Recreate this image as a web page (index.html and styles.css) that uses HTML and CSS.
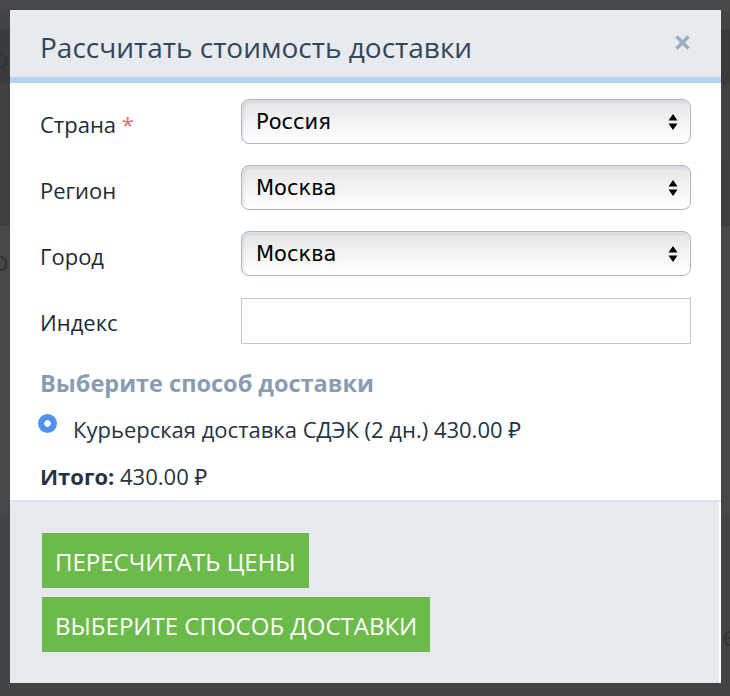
FILE: index.html
```html
<!DOCTYPE html>
<html lang="ru">
<head>
<meta charset="utf-8">
<title>Рассчитать стоимость доставки</title>
<link rel="stylesheet" href="styles.css">
</head>
<body>
<div class="page">
  <div class="band b1"></div>
  <div class="band b2"></div>
  <div class="band b3"><span class="ghost-left">о</span></div>
  <div class="band b4"></div>
  <div class="band b5"></div>
  <div class="band b6"><span class="ghost-left g2">о</span></div>
  <div class="band b7"><span class="ghost-right">е</span></div>
</div>

<div class="modal">
  <div class="modal-header">
    <h2 class="modal-title">Рассчитать стоимость доставки</h2>
    <svg class="close" width="15" height="15" viewBox="0 0 15 15"><path d="M1.5 1.5 L13.5 13.5 M13.5 1.5 L1.5 13.5" stroke="#9eadbd" stroke-width="3.4" stroke-linecap="butt"/></svg>
  </div>
  <div class="modal-body">
    <div class="form-grid">
      <label class="label">Страна <span class="req">*</span></label>
      <div class="select"><span>Россия</span>
        <svg class="arrows" width="10" height="18" viewBox="0 0 10 18"><path d="M5 1 L9.5 7.5 H0.5 Z M5 17 L9.5 10.5 H0.5 Z" fill="#000"/></svg>
      </div>
      <label class="label">Регион</label>
      <div class="select"><span>Москва</span>
        <svg class="arrows" width="10" height="18" viewBox="0 0 10 18"><path d="M5 1 L9.5 7.5 H0.5 Z M5 17 L9.5 10.5 H0.5 Z" fill="#000"/></svg>
      </div>
      <label class="label">Город</label>
      <div class="select"><span>Москва</span>
        <svg class="arrows" width="10" height="18" viewBox="0 0 10 18"><path d="M5 1 L9.5 7.5 H0.5 Z M5 17 L9.5 10.5 H0.5 Z" fill="#000"/></svg>
      </div>
      <label class="label">Индекс</label>
      <div class="input"></div>
    </div>
    <h3 class="section-title">Выберите способ доставки</h3>
    <div class="radio-row">
      <span class="radio"></span>
      <span class="radio-text">Курьерская доставка СДЭК (2 дн.) 430.00 ₽</span>
    </div>
    <div class="total"><b>Итого:</b> 430.00 ₽</div>
  </div>
  <div class="modal-footer">
    <button class="btn">ПЕРЕСЧИТАТЬ ЦЕНЫ</button>
    <button class="btn">ВЫБЕРИТЕ СПОСОБ ДОСТАВКИ</button>
  </div>
</div>
</body>
</html>
```

FILE: styles.css
```css
html, body {
  margin: 0;
  padding: 0;
}
body {
  width: 730px;
  height: 696px;
  overflow: hidden;
  background: #474747;
  font-family: "Open Sans", "Noto Sans", sans-serif;
  position: relative;
}
.page {
  display: flex;
  flex-direction: column;
}
.band {
  position: relative;
  overflow: hidden;
  font-size: 28px;
  line-height: 1;
}
.b1 { height: 10px; background: #484848; }
.b2 { height: 19px; background: #444444; }
.b3 { height: 55px; background: #3b3b3b; }
.b4 { height: 76px; background: #414141; }
.b5 { height: 66px; background: #3e3e3e; }
.b6 { height: 289px; background: #474747; }
.b7 { height: 181px; background: #434343; }
.ghost-left {
  display: block;
  margin-left: -8px;
  margin-top: 14px;
  color: #2f3338;
}
.g2 { margin-top: 20px; }
.ghost-right {
  display: block;
  margin-left: 722px;
  margin-top: 106px;
  color: #2f3338;
}

.modal {
  position: absolute;
  left: 10px;
  top: 10px;
  width: 711px;
  height: 673px;
  display: flex;
  flex-direction: column;
  background: #fff;
}
.modal-header {
  background: #e7eaef;
  border-bottom: 6px solid #b6d2f2;
  display: flex;
  align-items: flex-start;
  justify-content: space-between;
  padding: 0 31px 0 30px;
  box-sizing: border-box;
  height: 73px;
}
.modal-title {
  margin: 18px 0 0;
  font-size: 28px;
  font-weight: 400;
  color: #34465a;
  line-height: normal;
}
.close {
  margin-top: 25px;
  flex: none;
}
.modal-body {
  padding: 16px 30px 0;
  flex: none;
  height: 419px;
  box-sizing: border-box;
  border-bottom: 2px solid #dcdfe4;
}
.form-grid {
  display: grid;
  grid-template-columns: 201px 450px;
  grid-auto-rows: 45px;
  row-gap: 21px;
  align-items: center;
}
.label {
  font-size: 22px;
  line-height: 30px;
  color: #222b35;
  padding-top: 4px;
}
.req {
  color: #e06a6a;
}
.select {
  position: relative;
  height: 45px;
  box-sizing: border-box;
  border: 1px solid #a8b7c8;
  border-radius: 8px;
  background: linear-gradient(#e4e4e4 0%, #f4f4f4 55%, #ffffff 100%);
  box-shadow: inset 2px 2px 3px rgba(0,0,0,0.08), inset 0 0 0 1px rgba(255,255,255,0.5);
  display: flex;
  align-items: center;
  padding-left: 14px;
  font-family: "DejaVu Sans", Verdana, sans-serif;
  font-size: 21px;
  color: #000;
}
.arrows {
  position: absolute;
  right: 12px;
  top: 13px;
}
.input {
  height: 46px;
  box-sizing: border-box;
  border: 1px solid #c4c8cc;
  background: #fff;
  align-self: start;
  margin-top: 1px;
}
.section-title {
  margin: 26px 0 0;
  font-size: 23.5px;
  font-weight: 700;
  color: #8a9cb2;
  line-height: 30px;
}
.radio-row {
  display: flex;
  align-items: flex-start;
  margin-top: 16px;
  margin-left: -2px;
}
.radio {
  width: 19px;
  height: 19px;
  border-radius: 50%;
  background: radial-gradient(circle, #fff 0 3px, #4d93ee 3.5px);
  flex: none;
}
.radio-text {
  margin-left: 16px;
  font-size: 22px;
  line-height: 30px;
  color: #26323f;
}
.total {
  margin-top: 17px;
  font-size: 22px;
  line-height: 30px;
  color: #26323f;
}
.total b {
  font-weight: 700;
}
.modal-footer {
  flex: 1;
  background: #e6e9ee;
  display: flex;
  flex-direction: column;
  align-items: flex-start;
  gap: 9px;
  padding: 31px 32px 0;
  margin-right: 2px;
}
.btn {
  height: 55px;
  border: 0;
  background: #6cba4a;
  color: #fff;
  font-family: "Open Sans", "Noto Sans", sans-serif;
  font-size: 24px;
  padding: 2px 13px 0;
  cursor: pointer;
}
```
